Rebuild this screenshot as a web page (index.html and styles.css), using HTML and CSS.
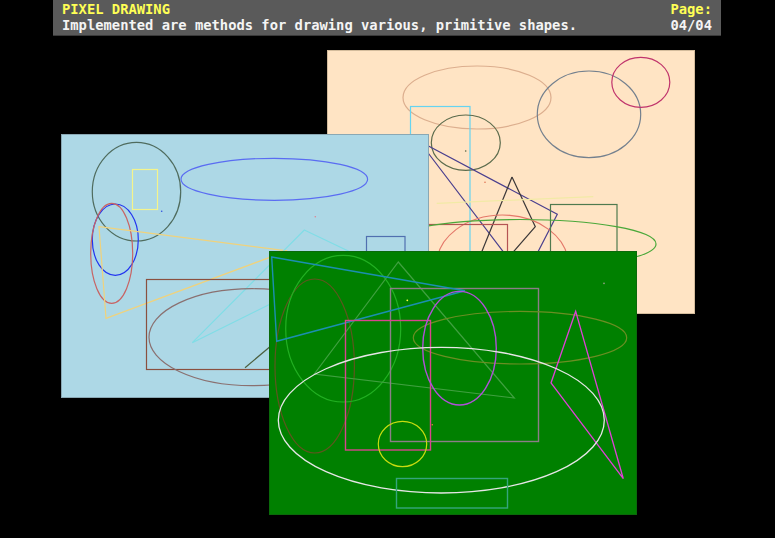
FILE: index.html
```html
<!DOCTYPE html>
<html>
<head>
<meta charset="utf-8">
<link rel="stylesheet" href="styles.css">
</head>
<body>
<header class="titlebar">
  <div class="row">
    <span class="title">PIXEL DRAWING</span>
    <span class="title">Page:</span>
  </div>
  <div class="row">
    <span class="desc">Implemented are methods for drawing various, primitive shapes.</span>
    <span class="desc">04/04</span>
  </div>
</header>

<div class="desktop">
  <div class="panel peach">
    <svg width="366" height="262" viewBox="0 0 366 262" fill="none" stroke-width="1.2">
      <ellipse cx="149" cy="46.5" rx="74" ry="31.5" stroke="#dcae8e"/>
      <rect x="82.5" y="55.5" width="59.5" height="190" stroke="#66d4f0"/>
      <ellipse cx="137.8" cy="91.7" rx="34.5" ry="27.7" stroke="#5b6b4c"/>
      <ellipse cx="261" cy="63.3" rx="51.7" ry="43.3" stroke="#74808e"/>
      <ellipse cx="312.8" cy="31.3" rx="29" ry="25" stroke="#c0346c"/>
      <polygon points="91,90 229.3,163.3 196,228" stroke="#4a3f8e"/>
      <polyline points="184,126 146,220" stroke="#3c3838"/>
      <polyline points="184,126 207.3,175.7 180,207" stroke="#3c3838"/>
      <line x1="108.7" y1="152.3" x2="265.3" y2="145.7" stroke="#f2eaa6"/>
      <ellipse cx="174.5" cy="214" rx="65.8" ry="50" stroke="#e4786a"/>
      <rect x="60" y="173.5" width="119.5" height="60" stroke="#b45454"/>
      <rect x="222.5" y="153.5" width="66.5" height="70" stroke="#4f7a4f"/>
      <ellipse cx="192" cy="193" rx="136" ry="24.5" stroke="#4aa83a"/>
      <circle cx="157" cy="131.3" r="0.8" fill="#e07050" stroke="none"/>
      <circle cx="137.7" cy="100" r="0.8" fill="#506040" stroke="none"/>
    </svg>
  </div>

  <div class="panel blue">
    <svg width="366" height="262" viewBox="0 0 366 262" fill="none" stroke-width="1.2">
      <ellipse cx="74.5" cy="56.7" rx="44.2" ry="49.3" stroke="#4f6c5e"/>
      <rect x="70.5" y="34.5" width="25" height="40" stroke="#f4f48c"/>
      <ellipse cx="212.3" cy="44.3" rx="93.3" ry="21" stroke="#5a6cf2"/>
      <ellipse cx="53.3" cy="104.7" rx="23" ry="35.7" stroke="#2234f0"/>
      <ellipse cx="49.7" cy="118.3" rx="21" ry="50" stroke="#c86464"/>
      <polygon points="37,91.7 225.2,115.9 44,183.3" stroke="#f0d27c"/>
      <polygon points="242.3,95 301,123 130.3,207.7" stroke="#80dde6"/>
      <rect x="304.5" y="101.5" width="38.5" height="40" stroke="#5070b0"/>
      <rect x="84.5" y="144.5" width="150" height="90" stroke="#8a5040"/>
      <ellipse cx="190" cy="202.2" rx="103" ry="48.5" stroke="#8a7070"/>
      <line x1="183" y1="232.7" x2="210" y2="210" stroke="#4c6040"/>
      <circle cx="99.7" cy="76.3" r="0.8" fill="#3050e0" stroke="none"/>
      <circle cx="253.3" cy="81.7" r="0.8" fill="#e08090" stroke="none"/>
    </svg>
  </div>

  <div class="panel green">
    <svg width="366" height="262" viewBox="0 0 366 262" fill="none" stroke-width="1.2">
      <ellipse cx="44.7" cy="114" rx="39.7" ry="87" stroke="#5e561e"/>
      <ellipse cx="73.2" cy="76.7" rx="57.5" ry="73.3" stroke="#22b022"/>
      <polygon points="128.3,10 244.3,146 44.3,122" stroke="#40a040"/>
      <rect x="120.5" y="36.5" width="148" height="153" stroke="#8c7e88" stroke-width="1.4"/>
      <ellipse cx="250" cy="85.7" rx="106.7" ry="26.3" stroke="#6b8e23"/>
      <polygon points="1.7,5 195,38.7 6.7,89.3" stroke="#1b8fb0" stroke-width="1.4"/>
      <rect x="75.5" y="68.5" width="85" height="129.5" stroke="#d8458e" stroke-width="1.4"/>
      <ellipse cx="189.5" cy="96.2" rx="36.8" ry="56.8" stroke="#b050d8" stroke-width="1.4"/>
      <polygon points="305.7,59.3 281,131 353.3,226.7" stroke="#e040d8" stroke-width="1.3"/>
      <ellipse cx="171.3" cy="168.2" rx="163" ry="72.8" stroke="#e6e6e6" stroke-width="1.3"/>
      <ellipse cx="132.5" cy="192" rx="24.2" ry="22.7" stroke="#c8dc10"/>
      <rect x="126.5" y="226.5" width="111" height="29.5" stroke="#35a57d" stroke-width="1.4"/>
      <circle cx="137.3" cy="48.3" r="0.9" fill="#ffff40" stroke="none"/>
      <circle cx="162.3" cy="172.7" r="0.8" fill="#e08040" stroke="none"/>
      <circle cx="334" cy="31.3" r="0.9" fill="#90a080" stroke="none"/>
    </svg>
  </div>
</div>
</body>
</html>
```

FILE: styles.css
```css
html, body {
  margin: 0;
  padding: 0;
  background: #000;
  width: 775px;
  height: 538px;
  overflow: hidden;
}

body {
  position: relative;
}

.titlebar {
  margin-left: 53px;
  width: 668px;
  height: 36px;
  box-sizing: border-box;
  padding: 1px 9px 0 9px;
  background: #5a5a5a;
  border-bottom: 1px solid #3a3a3a;
  font-family: "DejaVu Sans Mono", "Liberation Mono", monospace;
  font-weight: bold;
  font-size: 13.8px;
  line-height: 16px;
}

.row {
  display: flex;
  justify-content: space-between;
}

.title {
  color: #ffff55;
}

.desc {
  color: #f4f4f4;
}

.desktop {
  position: absolute;
  left: 0;
  top: 0;
  width: 775px;
  height: 538px;
}

.panel {
  position: absolute;
  width: 366px;
  height: 262px;
  box-sizing: border-box;
}

.panel svg {
  display: block;
  overflow: hidden;
}

.peach {
  left: 328px;
  top: 51px;
  background: #ffe4c4;
  outline: 1px solid #d4bc9c;
}

.blue {
  left: 62px;
  top: 135px;
  background: #add8e6;
  outline: 1px solid #8aa8b4;
}

.green {
  left: 270px;
  top: 252px;
  background: #008000;
  outline: 1px solid #0a6a0a;
}
```
